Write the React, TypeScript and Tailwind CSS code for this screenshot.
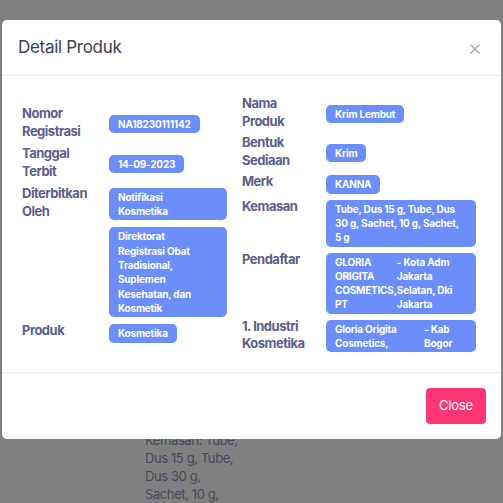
import React from "react";

const font = { fontFamily: "Inter, 'Noto Sans', sans-serif" };

function Badge({ children }: { children: React.ReactNode }) {
  return (
    <span className="inline-block rounded-[5px] bg-[#6b8efb] px-[9px] py-[2px] text-[10px] font-bold leading-[14.3px] tracking-[-0.2px] text-white">
      {children}
    </span>
  );
}

function Lines({ items }: { items: string[] }) {
  return (
    <span className="flex flex-col">
      {items.map((t, i) => (
        <span key={i} className="whitespace-nowrap">
          {t}
        </span>
      ))}
    </span>
  );
}

function Row({
  label,
  labelW,
  valueW,
  children,
}: {
  label: React.ReactNode;
  labelW: string;
  valueW: string;
  children: React.ReactNode;
}) {
  return (
    <div className="flex items-center">
      <div className={`${labelW} self-start shrink-0 text-[13px] font-bold leading-[17.5px] tracking-[-0.5px] text-[#5a5e8c]`}>{label}</div>
      <div className={`${valueW} mt-[2px] flex flex-col items-start`}>{children}</div>
    </div>
  );
}

export default function App() {
  return (
    <div className="relative h-[503px] w-full overflow-hidden bg-[#808080]" style={font}>
      <div className="pl-[145px] pt-[431px] text-[13px] leading-[18px] tracking-[-0.4px] text-[#46485c]">
        <div>Kemasan: Tube,</div>
        <div>Dus 15 g, Tube,</div>
        <div>Dus 30 g,</div>
        <div>Sachet, 10 g,</div>
      </div>

      <div className="absolute left-[2px] top-[20px] w-[499px] rounded-[5px] bg-white">
        <div className="flex h-[56px] items-center justify-between border-b border-[#e9ecef] pl-[16px] pr-[21px]">
          <div className="mt-[1px] text-[17px] tracking-[-0.3px] text-[#3d4052]">Detail Produk</div>
          <svg width="10" height="10" viewBox="0 0 10 10" className="mt-[2px]">
            <path d="M0.5 0.5 L9.5 9.5 M9.5 0.5 L0.5 9.5" stroke="#a3a4ae" strokeWidth="1.3" />
          </svg>
        </div>

        <div className="flex h-[296px] items-center px-[20px]">
          <div className="flex w-[220px] flex-col gap-[5px]">
            <Row label={<>Nomor<br />Registrasi</>} labelW="w-[87px]" valueW="w-[118px]">
              <Badge>NA18230111142</Badge>
            </Row>
            <Row label={<>Tanggal<br />Terbit</>} labelW="w-[87px]" valueW="w-[118px]">
              <Badge>14-09-2023</Badge>
            </Row>
            <Row label={<>Diterbitkan<br />Oleh</>} labelW="w-[87px]" valueW="w-[118px]">
              <Badge>
                <span className="block w-[100px]">
                  <Lines items={["Notifikasi", "Kosmetika"]} />
                </span>
              </Badge>
            </Row>
            <Row label="" labelW="w-[87px]" valueW="w-[118px]">
              <Badge>
                <span className="block w-[100px]">
                  <Lines items={["Direktorat", "Registrasi Obat", "Tradisional,", "Suplemen", "Kesehatan, dan", "Kosmetik"]} />
                </span>
              </Badge>
            </Row>
            <Row label="Produk" labelW="w-[87px]" valueW="w-[118px]">
              <Badge>Kosmetika</Badge>
            </Row>
          </div>

          <div className="flex w-[234px] flex-col gap-[4px]">
            <Row label={<>Nama<br />Produk</>} labelW="w-[84px]" valueW="w-[150px]">
              <Badge>Krim Lembut</Badge>
            </Row>
            <Row label={<>Bentuk<br />Sediaan</>} labelW="w-[84px]" valueW="w-[150px]">
              <Badge>Krim</Badge>
            </Row>
            <Row label="Merk" labelW="w-[84px]" valueW="w-[150px]">
              <Badge>KANNA</Badge>
            </Row>
            <Row label="Kemasan" labelW="w-[84px]" valueW="w-[150px]">
              <Badge>
                <span className="block w-[132px]">
                  <Lines items={["Tube, Dus 15 g, Tube, Dus", "30 g, Sachet, 10 g, Sachet,", "5 g"]} />
                </span>
              </Badge>
            </Row>
            <Row label="Pendaftar" labelW="w-[84px]" valueW="w-[150px]">
              <Badge>
                <span className="grid w-[132px] grid-cols-[auto_1fr]">
                  <Lines items={["GLORIA", "ORIGITA", "COSMETICS,", "PT"]} />
                  <Lines items={["- Kota Adm", "Jakarta", "Selatan, Dki", "Jakarta"]} />
                </span>
              </Badge>
            </Row>
            <Row label={<>1. Industri<br />Kosmetika</>} labelW="w-[84px]" valueW="w-[150px]">
              <Badge>
                <span className="grid w-[132px] grid-cols-[89px_1fr]">
                  <Lines items={["Gloria Origita", "Cosmetics,"]} />
                  <Lines items={["- Kab", "Bogor"]} />
                </span>
              </Badge>
            </Row>
          </div>
        </div>

        <div className="flex h-[67px] items-center justify-end border-t border-[#e9ecef] pr-[15px]">
          <button className="h-[36px] w-[60px] rounded-[4px] bg-[#ff3574] text-[13px] tracking-[-0.2px] text-white">Close</button>
        </div>
      </div>
    </div>
  );
}
